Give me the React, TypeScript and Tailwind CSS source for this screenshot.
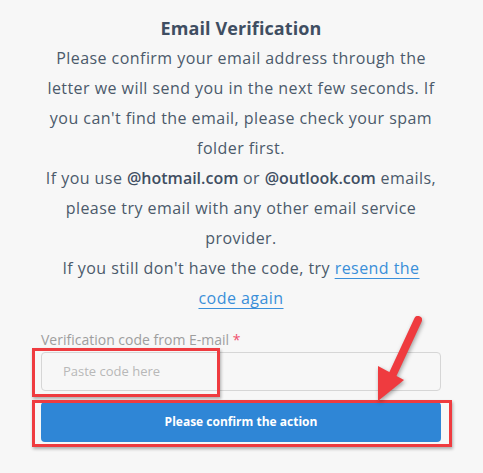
import React from "react";

function Arrow() {
  return (
    <svg
      className="absolute left-0 top-0 pointer-events-none"
      width="483"
      height="473"
      viewBox="0 0 483 473"
      style={{ filter: "drop-shadow(1px 2px 2px rgba(0,0,0,0.35))" }}
    >
      <line x1="418" y1="320" x2="392" y2="376" stroke="#ef3b3f" strokeWidth="8" strokeLinecap="round" />
      <polygon points="378,401 378,366 404,380" fill="#ef3b3f" />
    </svg>
  );
}

export default function App() {
  return (
    <div
      className="relative w-[483px] h-[473px] overflow-hidden bg-[#f7f7f7] text-[#4b5a6b]"
      style={{ fontFamily: "'Open Sans', 'Noto Sans', sans-serif" }}
    >
      <div className="w-[440px] ml-[21px] pt-[15px] flex flex-col items-center text-center">
        <h1 className="text-[18px] font-bold text-[#3f4e62] leading-[26px] tracking-[0.1px]">Email Verification</h1>
        <div className="text-[16px] leading-[30px] tracking-[0.45px] mt-[2px]">
          <p>
            Please confirm your email address through the
            <br />
            letter we will send you in the next few seconds. If
            <br />
            you can't find the email, please check your spam
            <br />
            folder first.
          </p>
          <p>
            If you use <span className="font-semibold text-[#3f4e62] tracking-normal">@hotmail.com</span> or{" "}
            <span className="font-semibold text-[#3f4e62] tracking-normal">@outlook.com</span> emails,
            <br />
            please try email with any other email service
            <br />
            provider.
          </p>
          <p>
            If you still don't have the code, try{" "}
            <a className="text-[#3a8fd9] underline underline-offset-4 decoration-1">
              resend the
              <br />
              code again
            </a>
          </p>
        </div>
      </div>

      <div className="w-[400px] ml-[41px] mt-[19px]">
        <label className="block text-[14px] leading-[16px] text-[#9e9e9e]">
          Verification code from E-mail <span className="text-[#f0506e]">*</span>
        </label>
        <div className="mt-[4px] h-[39px] rounded border border-[#d6d6d6] bg-[#f7f7f7] flex items-center pl-[21px] text-[13px] text-[#b8b8b8]">
          Paste code here
        </div>
        <button className="mt-[11px] w-full h-[40px] rounded-sm bg-[#2f86d6] text-white text-[12px] font-bold">
          Please confirm the action
        </button>
      </div>

      <div className="absolute left-[32px] top-[348px] w-[188px] h-[49px] border-[3px] border-[#ef3b3f] shadow-[1px_2px_3px_rgba(0,0,0,0.3)]" />
      <div className="absolute left-[32px] top-[400px] w-[420px] h-[47px] border-[3px] border-[#ef3b3f] shadow-[1px_2px_3px_rgba(0,0,0,0.3)]" />
      <Arrow />
    </div>
  );
}
